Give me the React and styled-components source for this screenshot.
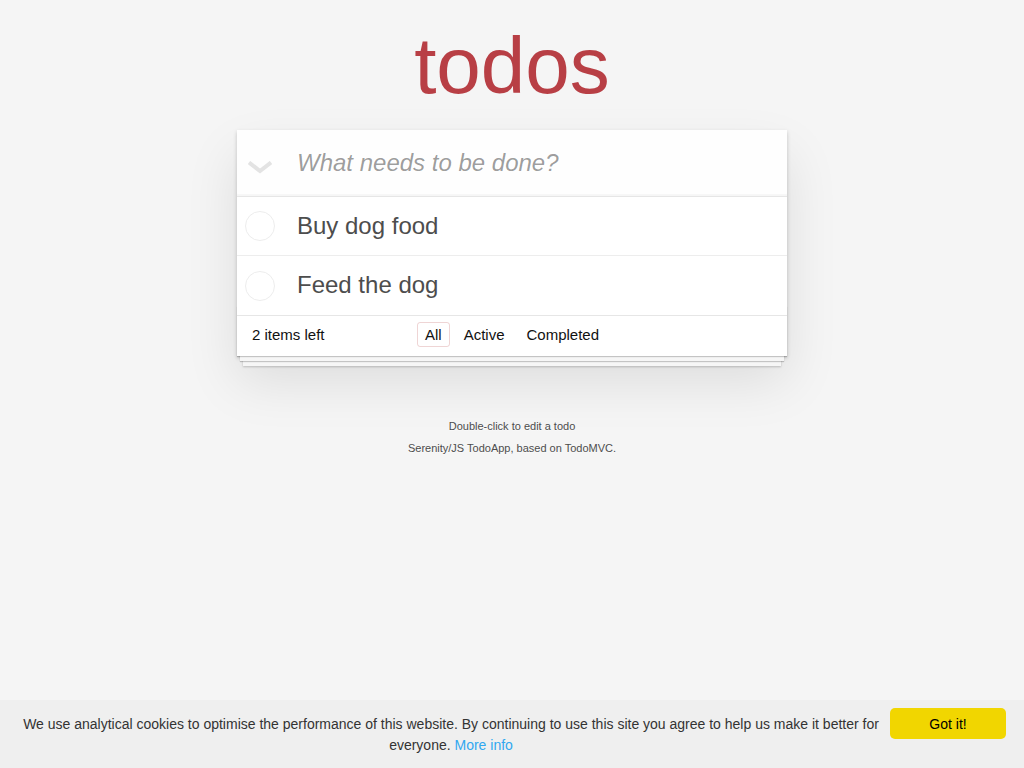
import React from "react";
import styled, { createGlobalStyle } from "styled-components";

const GlobalStyle = createGlobalStyle`
  html, body {
    margin: 0;
    padding: 0;
  }
  body {
    background: #f5f5f5;
    font: 14px "Liberation Sans", Arial, sans-serif;
    line-height: 1.4em;
    color: #111111;
    -webkit-font-smoothing: antialiased;
  }
`;

const Page = styled.div`
  width: 550px;
  margin: 0 auto;
`;

const Title = styled.h1`
  margin: 0;
  padding-top: 21px;
  font-size: 80px;
  line-height: 89px;
  font-weight: 200;
  text-align: center;
  color: #b83f45;
  text-rendering: optimizeLegibility;
`;

const Card = styled.section`
  margin: 20px 0 40px;
  background: #fff;
  position: relative;
  box-shadow: 0 2px 4px 0 rgba(0, 0, 0, 0.2), 0 25px 50px 0 rgba(0, 0, 0, 0.1);
`;

const InputRow = styled.header`
  display: flex;
  background: rgba(0, 0, 0, 0.003);
  box-shadow: inset 0 -2px 1px rgba(0, 0, 0, 0.03);
`;

const ToggleAll = styled.div`
  width: 60px;
  flex: none;
  display: flex;
  align-items: center;
  padding: 10px 0 0 11px;
  box-sizing: border-box;
`;

const NewTodo = styled.input`
  flex: 1;
  min-width: 0;
  padding: 16px 16px 16px 0;
  border: none;
  outline: none;
  background: transparent;
  font-family: inherit;
  font-size: 24px;
  line-height: 1.4em;
  color: #4d4d4d;
  caret-color: #111;

  &::placeholder {
    font-style: italic;
    color: rgba(0, 0, 0, 0.4);
  }
`;

const List = styled.ul`
  margin: 0;
  padding: 0;
  list-style: none;
  border-top: 1px solid #e6e6e6;
`;

const Item = styled.li`
  display: flex;
  align-items: center;
  font-size: 24px;
  border-bottom: ${(p) => (p.last ? "none" : "1px solid #ededed")};
`;

const Check = styled.span`
  width: 60px;
  flex: none;
  display: flex;
  align-items: center;

  &::before {
    content: "";
    width: 28px;
    height: 28px;
    margin-left: 8px;
    border: 1px solid #ededed;
    border-radius: 50%;
  }
`;

const Label = styled.label`
  padding: 15px 15px 15px 0;
  line-height: 1.2;
  color: #4d4d4d;
  word-break: break-all;
`;

const Footer = styled.footer`
  position: relative;
  display: grid;
  grid-template-columns: 1fr auto 1fr;
  grid-template-rows: 20px;
  align-items: start;
  padding: 10px 15px;
  height: 20px;
  font-size: 15px;
  border-top: 1px solid #e6e6e6;
  color: #111;

  &::before {
    content: "";
    position: absolute;
    right: 0;
    bottom: 0;
    left: 0;
    height: 50px;
    overflow: hidden;
    box-shadow: 0 1px 1px rgba(0, 0, 0, 0.2), 0 8px 0 -3px #f6f6f6,
      0 9px 1px -3px rgba(0, 0, 0, 0.2), 0 16px 0 -6px #f6f6f6,
      0 17px 2px -6px rgba(0, 0, 0, 0.2);
    pointer-events: none;
  }
`;

const Count = styled.span`
  text-align: left;
  line-height: 17px;
`;

const Filters = styled.ul`
  margin: -7px 0 0;
  padding: 0;
  list-style: none;
  display: flex;
  position: relative;
`;

const FilterLink = styled.a`
  display: block;
  margin: 3px;
  padding: 3px 7px;
  line-height: 17px;
  color: inherit;
  text-decoration: none;
  border: 1px solid ${(p) => (p.selected ? "rgba(175, 47, 47, 0.2)" : "transparent")};
  border-radius: 3px;
`;

const Info = styled.footer`
  margin: 65px auto 0;
  color: #4d4d4d;
  font-size: 11px;
  text-shadow: 0 1px 0 rgba(255, 255, 255, 0.5);
  text-align: center;

  p {
    line-height: 1;
    margin: 11px 0;
  }
`;

const CookieBar = styled.div`
  position: fixed;
  left: 0;
  right: 0;
  bottom: 0;
  display: flex;
  align-items: flex-start;
  padding: 8px 18px;
  background: #efefef;
  color: #333;
  font-size: 14px;
  font-family: "Liberation Sans", Arial, sans-serif;
`;

const CookieMessage = styled.span`
  flex: 1;
  margin: 6px 6px 4px 0;
  line-height: 21px;
  text-align: center;

  a {
    color: #31a8f0;
    text-decoration: none;
  }
`;

const GotIt = styled.button`
  flex: none;
  width: 116px;
  height: 31px;
  border: none;
  border-radius: 5px;
  background: #f1d600;
  color: #000;
  font-family: inherit;
  font-size: 14px;
`;

const Chevron = () => (
  <svg width="24" height="14" viewBox="0 0 24 14">
    <path d="M1 1.5 L12 10 L23 1.5" fill="none" stroke="#e3e3e3" strokeWidth="4" />
  </svg>
);

const todos = ["Buy dog food", "Feed the dog"];

export default function App() {
  return (
    <>
      <GlobalStyle />
      <Page>
        <Title>todos</Title>
        <Card>
          <InputRow>
            <ToggleAll>
              <Chevron />
            </ToggleAll>
            <NewTodo placeholder="What needs to be done?" autoFocus />
          </InputRow>
          <List>
            {todos.map((t, i) => (
              <Item key={t} last={i === todos.length - 1}>
                <Check />
                <Label>{t}</Label>
              </Item>
            ))}
          </List>
          <Footer>
            <Count>2 items left</Count>
            <Filters>
              <li>
                <FilterLink href="#/" selected>
                  All
                </FilterLink>
              </li>
              <li>
                <FilterLink href="#/active">Active</FilterLink>
              </li>
              <li>
                <FilterLink href="#/completed">Completed</FilterLink>
              </li>
            </Filters>
            <span />
          </Footer>
        </Card>
        <Info>
          <p>Double-click to edit a todo</p>
          <p>Serenity/JS TodoApp, based on TodoMVC.</p>
        </Info>
      </Page>
      <CookieBar>
        <CookieMessage>
          We use analytical cookies to optimise the performance of this website. By
          continuing to use this site you agree to help us make it better for everyone.{" "}
          <a href="#">More info</a>
        </CookieMessage>
        <GotIt>Got it!</GotIt>
      </CookieBar>
    </>
  );
}
